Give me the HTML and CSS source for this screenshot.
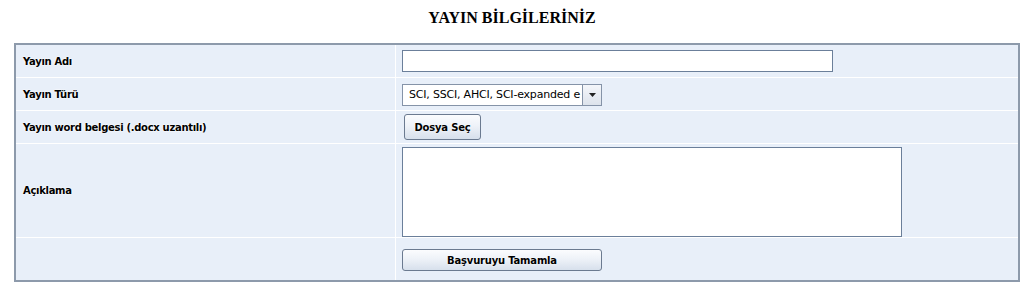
FILE: index.html
```html
<!DOCTYPE html>
<html lang="tr">

<head>
    <meta charset="UTF-8">
    <title>Yayın Bilgileriniz</title>
    <link rel="stylesheet" href="styles.css">
</head>

<body>
    <h1 class="title">YAYIN BİLGİLERİNİZ</h1>

    <!-- Yayın formu -->
    <table class="form-table">
        <tr class="row-short">
            <td class="label">Yayın Adı</td>
            <td class="field"><input type="text" class="text-input"></td>
        </tr>
        <tr class="row-short">
            <td class="label">Yayın Türü</td>
            <td class="field">
                <div class="select-box">
                    <span class="select-text">SCI, SSCI, AHCI, SCI-expanded e</span>
                    <span class="select-arrow">
                        <svg width="7" height="4" viewBox="0 0 7 4"><path d="M0 0H7L3.5 4Z" fill="#222"/></svg>
                    </span>
                </div>
            </td>
        </tr>
        <tr class="row-short">
            <td class="label">Yayın word belgesi (.docx uzantılı)</td>
            <td class="field"><button class="btn file-btn">Dosya Seç</button></td>
        </tr>
        <tr class="row-tall">
            <td class="label">Açıklama</td>
            <td class="field"><textarea class="text-area"></textarea></td>
        </tr>
        <tr class="row-submit">
            <td class="label"></td>
            <td class="field"><button class="btn submit-btn">Başvuruyu Tamamla</button></td>
        </tr>
    </table>
</body>

</html>
```

FILE: styles.css
```css
/* Genel */
body {
    margin: 0;
    padding: 0;
    background-color: #ffffff;
    font-family: Tahoma, "DejaVu Sans", Verdana, sans-serif;
    color: #000;
}

.title {
    font-family: "Liberation Serif", "Times New Roman", serif;
    font-size: 16px;
    font-weight: bold;
    text-align: center;
    margin: 9px 0 0;
    height: 34px;
}

/* Tabela */
.form-table {
    margin-left: 14px;
    width: 1006px;
    border-collapse: collapse;
    border: 2px solid #8d9aab;
    background-color: #e8eff9;
}

.form-table td {
    border: 1px solid #ffffff;
    padding: 0;
    vertical-align: middle;
}

.form-table tr:first-child td {
    border-top: none;
}

.form-table tr:last-child td {
    border-bottom: none;
}

.form-table td:first-child {
    border-left: none;
}

.form-table td:last-child {
    border-right: none;
}

.row-short td {
    height: 32px;
}

.row-tall td {
    height: 93px;
}

.row-submit td {
    height: 42px;
}

.label {
    width: 372px;
    padding-left: 7px !important;
    font-size: 10px;
    font-weight: bold;
    letter-spacing: -0.3px;
    text-shadow: 0 0 2px #fff, 0 0 2px #fff;
}

.field {
    padding-left: 6px !important;
}

/* Campos */
.text-input {
    display: block;
    width: 431px;
    height: 22px;
    box-sizing: border-box;
    border: 1px solid #6b7f9a;
    background: #fff;
    margin: 0;
}

.select-box {
    display: flex;
    width: 200px;
    height: 22px;
    box-sizing: border-box;
    border: 1px solid #8593a8;
    background: #fff;
    margin-top: 1px;
}

.select-text {
    flex: 1;
    font-family: "DejaVu Sans", Verdana, sans-serif;
    font-size: 11px;
    line-height: 20px;
    padding-left: 6px;
    white-space: nowrap;
    overflow: hidden;
    letter-spacing: -0.2px;
}

.select-arrow {
    width: 18px;
    display: flex;
    align-items: center;
    justify-content: center;
    border-left: 1px solid #8593a8;
    background: linear-gradient(#f4f6fa, #dde3ec);
}

.text-area {
    display: block;
    width: 500px;
    height: 90px;
    box-sizing: border-box;
    border: 1px solid #6b7f9a;
    background: #fff;
    margin: 2px 0 0;
    resize: none;
}

/* Botões */
.btn {
    font-family: Tahoma, "DejaVu Sans", Verdana, sans-serif;
    font-size: 10px;
    font-weight: bold;
    letter-spacing: -0.2px;
    color: #000;
    border: 1px solid #6b7a90;
    border-radius: 3px;
    background: linear-gradient(#fbfcfe 0%, #eef2f8 45%, #d7e0ec 100%);
    text-shadow: 0 0 2px #fff;
    cursor: pointer;
    padding: 0;
}

.file-btn {
    width: 77px;
    height: 26px;
    margin-left: 2px;
}

.submit-btn {
    width: 200px;
    height: 22px;
    margin-top: 2px;
}
```
